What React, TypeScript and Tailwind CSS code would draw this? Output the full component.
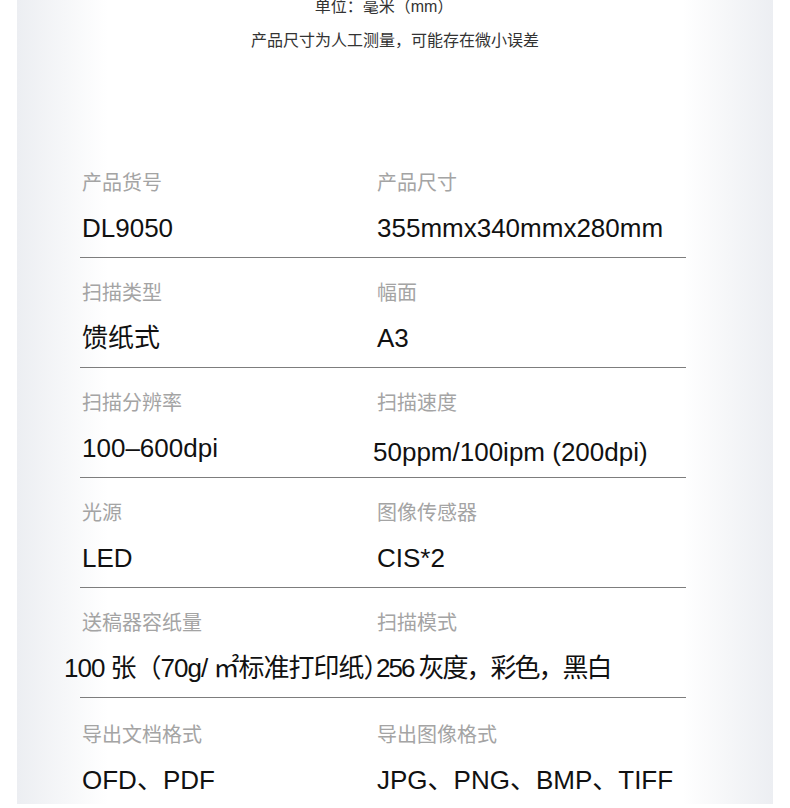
const rows: { label: [string, string]; value: [string, string]; cls?: [string, string] }[] = [
  { label: ["产品货号", "产品尺寸"], value: ["DL9050", "355mmx340mmx280mm"] },
  { label: ["扫描类型", "幅面"], value: ["馈纸式", "A3"], cls: ["text-[24px]", ""] },
  {
    label: ["扫描分辨率", "扫描速度"],
    value: ["100–600dpi", "50ppm/100ipm (200dpi)"],
    cls: ["", "-ml-[4px] translate-y-[4px]"],
  },
  { label: ["光源", "图像传感器"], value: ["LED", "CIS*2"] },
  {
    label: ["送稿器容纸量", "扫描模式"],
    value: ["100 张（70g/ ㎡标准打印纸）", "256 灰度，彩色，黑白"],
    cls: [
      "-ml-[18px] text-[24px] tracking-[-1px] whitespace-nowrap",
      "-ml-[1px] text-[24px] tracking-[-2px] whitespace-nowrap",
    ],
  },
  { label: ["导出文档格式", "导出图像格式"], value: ["OFD、PDF", "JPG、PNG、BMP、TIFF"] },
];

export default function App() {
  return (
    <div
      className="w-[790px] h-[808px] bg-white px-[17px] overflow-hidden"
      style={{ fontFamily: '"Liberation Sans", "Noto Sans CJK SC", sans-serif' }}
    >
      <div className="h-full bg-[linear-gradient(to_right,#eceef2_0%,#ffffff_12%,#ffffff_88%,#eceef2_100%)]">
        <div className="-mt-[4px] flex flex-col items-center text-[16px] leading-[22px] text-[#333]">
          <p className="mr-[22px]">单位：毫米（mm）</p>
          <p className="mt-[12px]">产品尺寸为人工测量，可能存在微小误差</p>
        </div>

        <div className="ml-[63px] w-[606px] mt-[96px]">
          {rows.map((row, i) => (
            <div
              key={i}
              className={`grid grid-cols-[297px_1fr] ${
                i < rows.length - 1 ? "pt-[21px] pb-[12px] border-b border-[#7d7d7d]" : "pt-[23px]"
              }`}
            >
              {[0, 1].map((c) => (
                <div key={c} className={c === 0 ? "pl-[2px]" : ""}>
                  <p className="text-[20px] leading-[28px] text-[#a4a4a4]">{row.label[c]}</p>
                  <p
                    className={`mt-[14px] h-[34px] text-[26px] leading-[34px] text-[#111] ${
                      row.cls ? row.cls[c] : ""
                    }`}
                  >
                    {row.value[c]}
                  </p>
                </div>
              ))}
            </div>
          ))}
        </div>
      </div>
    </div>
  );
}
